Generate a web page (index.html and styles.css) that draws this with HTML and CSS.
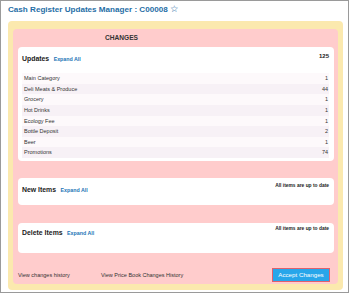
FILE: index.html
```html
<!DOCTYPE html>
<html>
<head>
<meta charset="utf-8">
<link rel="stylesheet" href="styles.css">
</head>
<body>
<div class="frame">
  <h1 class="title">Cash Register Updates Manager : C00008 <span class="star">☆</span></h1>
  <div class="outer">
    <div class="inner">
      <div class="changes-head">CHANGES</div>
      <div class="card card-updates">
        <div class="card-head">
          <div class="head-left"><span class="card-title">Updates</span> <a class="expand">Expand All</a></div>
          <div class="total">125</div>
        </div>
        <div class="rows">
          <div class="row"><span>Main Category</span><span>1</span></div>
          <div class="row"><span>Deli Meats &amp; Produce</span><span>44</span></div>
          <div class="row"><span>Grocery</span><span>1</span></div>
          <div class="row"><span>Hot Drinks</span><span>1</span></div>
          <div class="row"><span>Ecology Fee</span><span>1</span></div>
          <div class="row"><span>Bottle Deposit</span><span>2</span></div>
          <div class="row"><span>Beer</span><span>1</span></div>
          <div class="row"><span>Promotions</span><span>74</span></div>
        </div>
      </div>
      <div class="card card-new">
        <div class="card-head">
          <div class="head-left"><span class="card-title">New Items</span> <a class="expand">Expand All</a></div>
          <div class="status">All items are up to date</div>
        </div>
      </div>
      <div class="card card-delete">
        <div class="card-head">
          <div class="head-left"><span class="card-title">Delete Items</span> <a class="expand">Expand All</a></div>
          <div class="status">All items are up to date</div>
        </div>
      </div>
      <div class="footer">
        <a class="link link-history">View changes history</a>
        <a class="link link-price">View Price Book Changes History</a>
        <button class="accept">Accept Changes</button>
      </div>
    </div>
  </div>
</div>
</body>
</html>
```
FILE: styles.css
```css
html, body {
  margin: 0;
  padding: 0;
  background: #fff;
  font-family: "Liberation Sans", Arial, sans-serif;
}
.frame {
  width: 349px;
  height: 293px;
  border: 1px solid #9a9a9a;
  box-sizing: border-box;
  padding: 0 5px 0 7px;
}
.title {
  margin: 0;
  padding-top: 3px;
  height: 20px;
  box-sizing: border-box;
  font-size: 8.1px;
  line-height: 10px;
  font-weight: bold;
  color: #1f6ea6;
}
.star {
  font-family: "DejaVu Sans", sans-serif;
  font-weight: normal;
  font-size: 9.5px;
  line-height: 10px;
  color: #1f6ea6;
}
.outer {
  background: #fbe9ae;
  border-radius: 4px;
  padding: 8px 5px 6px 5px;
}
.inner {
  background: #ffcccc;
  border-radius: 4px;
  padding: 0 4px 2px 5px;
}
.changes-head {
  height: 18px;
  line-height: 18px;
  padding-left: 87px;
  font-size: 6.6px;
  font-weight: bold;
  color: #333;
}
.card {
  background: #fff;
  border-radius: 4px;
  padding: 4px 5px 3px 4px;
  box-sizing: border-box;
}
.card-head {
  display: flex;
  justify-content: space-between;
  align-items: flex-start;
  height: 10px;
}
.head-left {
  line-height: 10px;
}
.card-title {
  font-size: 6.9px;
  font-weight: bold;
  color: #222;
}
.expand {
  font-size: 5.3px;
  font-weight: bold;
  color: #1a74b6;
}
.total {
  font-size: 6px;
  font-weight: bold;
  color: #222;
  line-height: 10px;
}
.status {
  font-size: 4.9px;
  font-weight: bold;
  color: #222;
  line-height: 8px;
}
.rows {
  margin-top: 12px;
}
.row {
  display: flex;
  justify-content: space-between;
  height: 10.625px;
  line-height: 10.625px;
  padding: 0 1px 0 2px;
  font-size: 5.5px;
  color: #333;
  background: #fdf9fb;
}
.row:nth-child(even) {
  background: #f7f1f6;
}
.card-updates {
  height: 114px;
}
.card-new {
  margin-top: 17px;
  height: 27px;
}
.card-delete {
  margin-top: 18px;
  height: 30px;
  padding-top: 2px;
}
.footer {
  display: flex;
  align-items: center;
  margin-top: 15px;
  height: 14px;
}
.link {
  font-size: 5.5px;
  color: #333;
}
.link-history {
  margin-left: 0;
  width: 83px;
}
.link-price {
  flex: 1;
}
.accept {
  width: 58px;
  height: 14px;
  margin: 0 4px 0 0;
  padding: 0;
  border: 1px solid #e0606c;
  background: #27a6ea;
  color: #fff;
  font-family: "Liberation Sans", Arial, sans-serif;
  font-size: 6.2px;
  line-height: 12px;
}
```
